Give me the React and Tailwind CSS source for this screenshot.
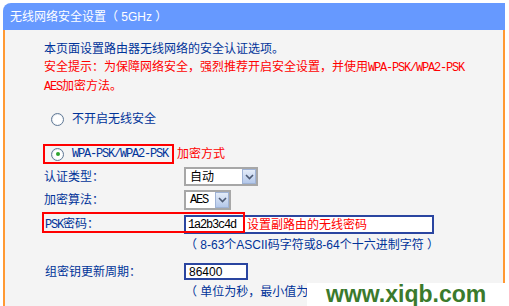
const font = { fontFamily: '"Liberation Sans", "Noto Sans CJK SC", sans-serif' };

const Mono = ({ children, className = "" }) => (
  <span className={`font-['Liberation_Mono',monospace] text-[12px] tracking-[-1.2px] ${className}`}>{children}</span>
);

const Radio = ({ checked }) => (
  <span className="w-[13px] h-[13px] rounded-full border border-[#5f7896] bg-gradient-to-br from-[#dfe4ea] to-white flex items-center justify-center shrink-0">
    <span className="w-[9px] h-[9px] rounded-full bg-white flex items-center justify-center">
      {checked && <span className="w-[4px] h-[4px] rounded-full bg-[#2fa52f]" />}
    </span>
  </span>
);

const Chevron = () => (
  <span className="w-[14px] h-full bg-gradient-to-b from-[#e4ecf8] to-[#b4c8ea] border border-[#9fb3d6] flex items-center justify-center">
    <svg width="9" height="6" viewBox="0 0 9 6">
      <path d="M1 1 L4.5 4.5 L8 1" fill="none" stroke="#4d5b75" strokeWidth="1.6" />
    </svg>
  </span>
);

const Select = ({ width, children }) => (
  <div className={`${width} h-full bg-white border-2 border-[#a7a7a7] flex items-stretch`}>
    <div className="flex-1 flex items-center pl-[4px] text-black">{children}</div>
    <Chevron />
  </div>
);

export default function App() {
  return (
    <div className="w-[509px] h-[306px] bg-white overflow-hidden relative text-[12px] text-[#003399]" style={font}>
      <div className="pt-[3px] pl-[3px] pr-[4px]">
        <div className="h-[27px] bg-[#6699ff] rounded-tl-[8px] flex items-center pl-[7px] text-white">
          无线网络安全设置（ 5GHz ）
        </div>
        <div className="h-[276px] bg-[#f4f4f4] border-l-2 border-r-2 border-[#ff9933] pl-[39px] pt-[10px]">
          <div className="leading-[18px]">
            <div>本页面设置路由器无线网络的安全认证选项。</div>
            <div className="text-[#ff0000]">
              安全提示：为保障网络安全，强烈推荐开启安全设置，并使用<Mono>WPA-PSK/WPA2-PSK</Mono>
              <br />
              <Mono>AES</Mono>加密方法。
            </div>
          </div>

          <div className="mt-[14px] h-[18px] flex items-center pl-[7px] gap-[8px]">
            <Radio />
            <span>不开启无线安全</span>
          </div>

          <div className="mt-[16px] h-[20px] flex items-center ml-[-1px]">
            <div className="w-[131px] h-full border-2 border-[#ff0000] flex items-center pl-[6px] gap-[8px]">
              <Radio checked />
              <Mono>WPA-PSK/WPA2-PSK</Mono>
            </div>
            <span className="ml-[3px] text-[#ff0000]">加密方式</span>
          </div>

          <div className="mt-[3px] h-[19px] flex items-center">
            <span className="w-[140px]">认证类型：</span>
            <Select width="w-[74px]">自动</Select>
          </div>

          <div className="mt-[4px] h-[20px] flex items-center">
            <span className="w-[140px]">加密算法：</span>
            <Select width="w-[47px]"><Mono>AES</Mono></Select>
          </div>

          <div className="mt-[5px] h-[19px] flex items-center relative">
            <span className="w-[140px] pl-[1px]"><Mono>PSK</Mono>密码：</span>
            <div className="w-[250px] h-full bg-white border-2 border-[#2a45a0] flex items-center pl-[2px]">
              <Mono className="w-[59px] text-black">1a2b3c4d</Mono>
              <span className="text-[#ff0000]">设置副路由的无线密码</span>
            </div>
            <div className="absolute left-[-2px] top-[-3px] w-[203px] h-[21px] border-2 border-[#ff0000]" />
          </div>

          <div className="mt-[2px] h-[18px] flex items-center pl-[141px]">
            （ 8-63个ASCII码字符或8-64个十六进制字符 ）
          </div>

          <div className="mt-[9px] h-[17px] flex items-center">
            <span className="w-[140px] pl-[1px]">组密钥更新周期：</span>
            <div className="w-[64px] h-full bg-white border-2 border-[#2a45a0] flex items-center pl-[3px] text-black">
              86400
            </div>
          </div>

          <div className="mt-[3px] h-[18px] flex items-center pl-[141px]">
            （ 单位为秒，最小值为30 ）
          </div>
        </div>
      </div>

      <div className="absolute left-[307px] top-[283px] w-[202px] h-[23px] bg-white flex items-center pl-[19px]">
        <span className="font-['Liberation_Sans',sans-serif] font-bold text-[23px] leading-none text-[#3b7a2c]">www.xiqb.com</span>
      </div>
    </div>
  );
}
